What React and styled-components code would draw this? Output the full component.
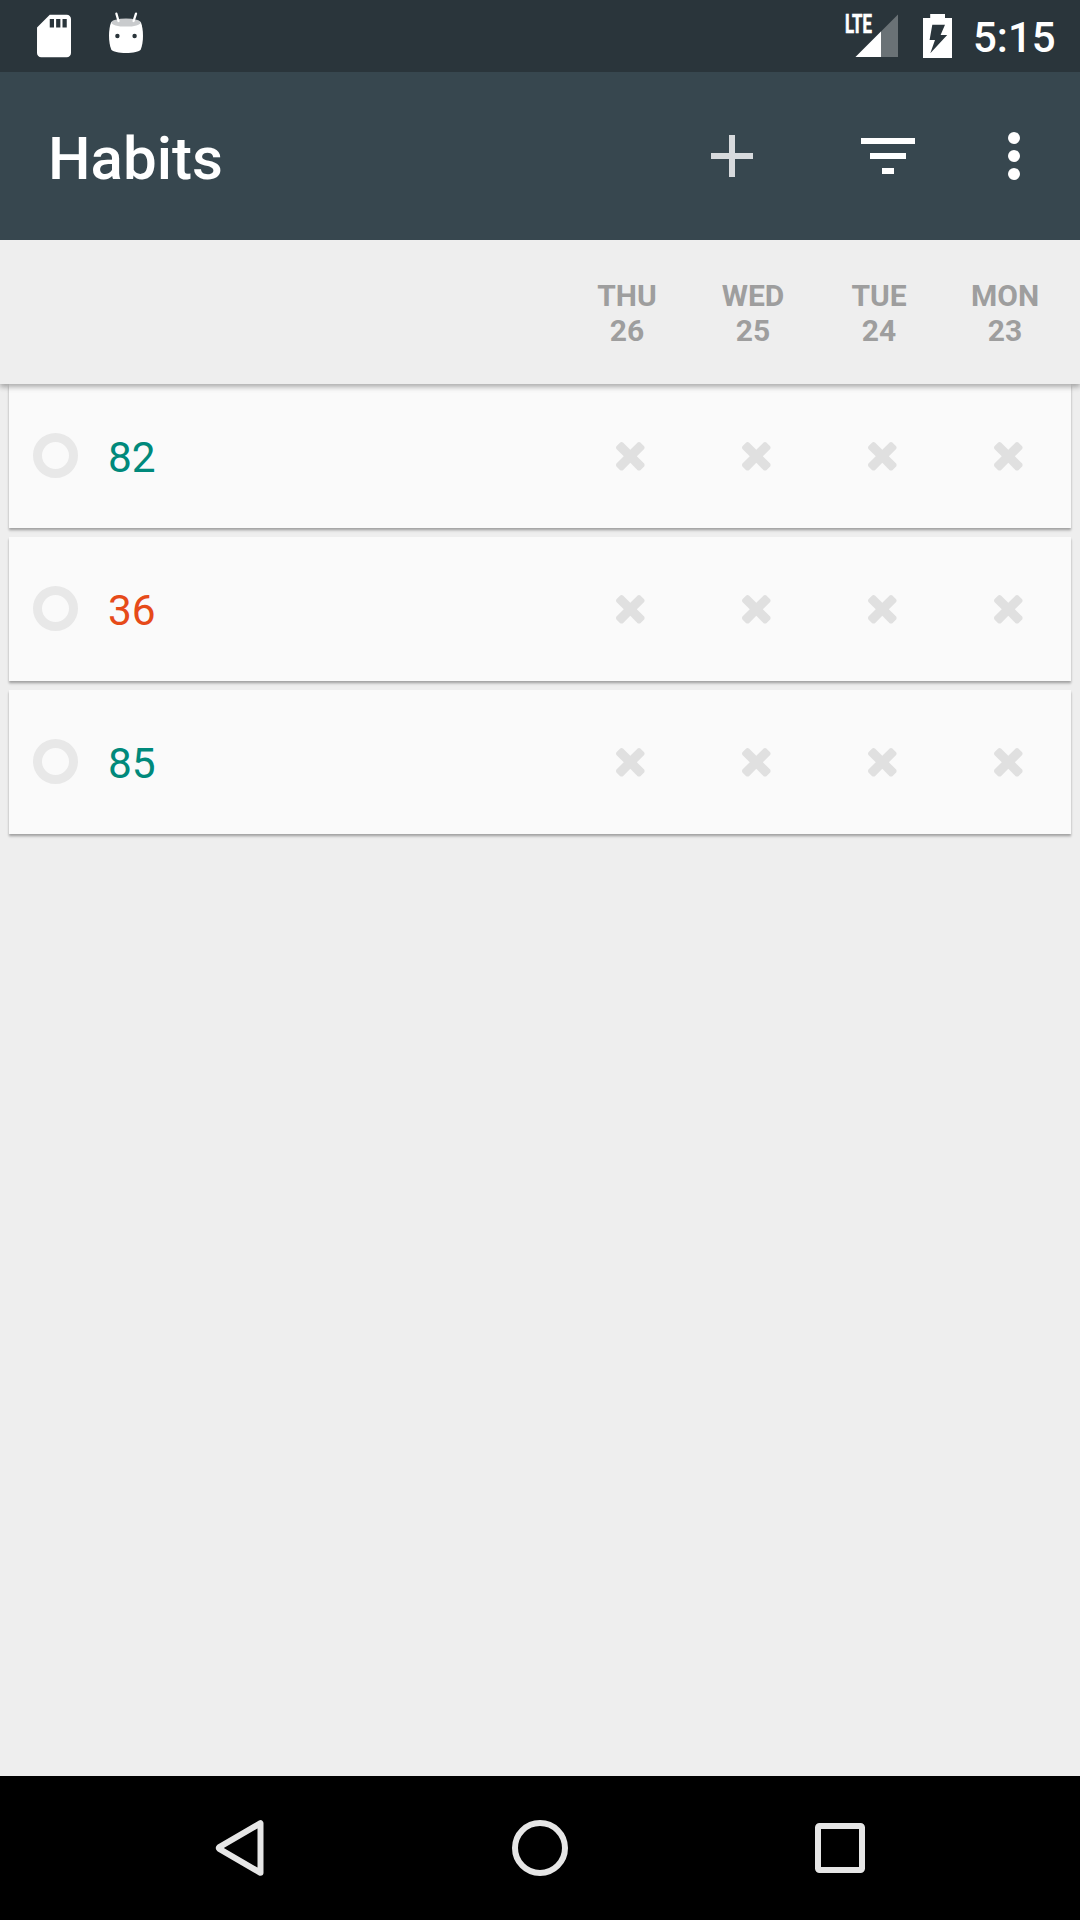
import React from "react";
import styled, { createGlobalStyle } from "styled-components";

const GlobalStyle = createGlobalStyle`
  html, body { margin: 0; padding: 0; background: #eeeeee; }
  * { box-sizing: border-box; }
`;

const Screen = styled.div`
  width: 1080px;
  height: 1920px;
  display: flex;
  flex-direction: column;
  overflow: hidden;
  background: #eeeeee;
  font-family: Roboto, "Noto Sans", sans-serif;
`;

const StatusBar = styled.header`
  height: 72px;
  flex: none;
  display: flex;
  justify-content: space-between;
  background: #2a353b;
`;

const StatusGroup = styled.div`
  display: flex;
  padding: ${(p) => (p.$end ? "0 24px 0 0" : "0 0 0 24px")};
`;

const StatusIcon = styled.svg`
  display: block;
  flex: none;
  height: 72px;
  width: ${(p) => p.$width}px;
`;

const Clock = styled.time`
  width: 83px;
  font-size: 42px;
  font-weight: 500;
  line-height: 76px;
  color: #ffffff;
  white-space: nowrap;
`;

const Toolbar = styled.div`
  height: 168px;
  flex: none;
  display: flex;
  align-items: center;
  justify-content: space-between;
  padding: 0 12px 0 48px;
  background: #37474f;
`;

const Title = styled.h1`
  margin: 0;
  padding-top: 6px;
  font-size: 60px;
  font-weight: 500;
  line-height: 72px;
  color: #ffffff;
`;

const Actions = styled.div`
  display: flex;
  align-items: center;
`;

const ActionButton = styled.button`
  width: ${(p) => p.$width}px;
  height: 144px;
  margin: 0 ${(p) => p.$gap || 0}px 0 0;
  padding: 0;
  border: 0;
  background: none;
  color: ${(p) => p.$color || "#ffffff"};
  display: flex;
  align-items: center;
  justify-content: center;
`;

const DayHeader = styled.div`
  height: 144px;
  flex: none;
  display: flex;
  justify-content: flex-end;
  padding: 38px 12px 0 0;
  position: relative;
  z-index: 1;
  background: #eeeeee;
  box-shadow: 0 3px 5px rgba(0, 0, 0, 0.27), 0 0 10px rgba(0, 0, 0, 0.09);
  clip-path: inset(0 0 -24px 0);
`;

const Day = styled.div`
  width: 126px;
  display: flex;
  flex-direction: column;
  align-items: center;
  font-size: 30px;
  font-weight: 700;
  line-height: 35px;
  color: #9e9e9e;
`;

const HabitList = styled.main`
  flex: 1;
  display: flex;
  flex-direction: column;
  gap: 9px;
  padding: 0 9px;
`;

const HabitCard = styled.article`
  height: 144px;
  flex: none;
  display: flex;
  align-items: center;
  background: #fafafa;
  box-shadow: 0 2px 2px rgba(0, 0, 0, 0.24), 0 3px 3px rgba(0, 0, 0, 0.1);
`;

const ScoreRing = styled.div`
  width: 45px;
  height: 45px;
  margin: 0 30px 1px 24px;
  border: 9px solid #e8e8e8;
  border-radius: 50%;
`;

const HabitName = styled.span`
  flex: 1;
  padding-top: 3px;
  font-size: 42.4px;
  line-height: 50px;
  color: ${(p) => p.$color};
`;

const CheckCell = styled.div`
  width: 126px;
  padding: 1px 0 0 1px;
  display: flex;
  align-items: center;
  justify-content: center;
`;

const NavBar = styled.nav`
  height: 144px;
  flex: none;
  display: flex;
  padding: 0 90px;
  background: #000000;
`;

const NavButton = styled.button`
  flex: 1;
  padding: 0;
  border: 0;
  background: none;
  display: flex;
  align-items: center;
  justify-content: center;
`;

const NavIcon = ({ children }) => (
  <svg width="60" height="60" viewBox="-30 -30 60 60" fill="none" stroke="#e6e6e6" strokeWidth="6">
    {children}
  </svg>
);

const CrossMark = () => (
  <svg width="28.6" height="28.6" viewBox="110 -18 1188 1188" fill="#e0e0e0">
    <path d="M1298 214q0 -40 -28 -68l-136 -136q-28 -28 -68 -28t-68 28l-294 294l-294 -294q-28 -28 -68 -28t-68 28l-136 136q-28 28 -28 68t28 68l294 294l-294 294q-28 28 -28 68t28 68l136 136q28 28 68 28t68 -28l294 -294l294 294q28 28 68 28t68 -28l136 -136q28 -28 28 -68t-28 -68l-294 -294l294 -294q28 -28 28 -68z" />
  </svg>
);

const days = [
  { name: "THU", date: 26 },
  { name: "WED", date: 25 },
  { name: "TUE", date: 24 },
  { name: "MON", date: 23 },
];

const habits = [
  { name: "82", color: "#00897b" },
  { name: "36", color: "#e64a19" },
  { name: "85", color: "#00897b" },
];

export default function App() {
  return (
    <>
      <GlobalStyle />
      <Screen>
        <StatusBar>
          <StatusGroup>
            <StatusIcon $width={72} viewBox="24 0 72 72">
              <path
                transform="translate(28.5 10.5) scale(2.125)"
                fill="#ffffff"
                d="M18 2h-8L4.02 8 4 20c0 1.1.9 2 2 2h12c1.1 0 2-.9 2-2V4c0-1.1-.9-2-2-2zm-6 6h-2V4h2v4zm3 0h-2V4h2v4zm3 0h-2V4h2v4z"
              />
            </StatusIcon>
            <StatusIcon $width={72} viewBox="96 0 72 72">
              <path
                fill="#ffffff"
                d="M111.2 22C109.6 26 109 31 109 36C109 41 109.8 46 111.2 49.3C112.4 52 119 53 126 53C133 53 139.6 52 140.8 49.3C142.2 46 143 41 143 36C143 31 142.4 26 140.8 22Z"
              />
              <ellipse cx="126" cy="22.6" rx="14.8" ry="4" fill="#c9cbcd" />
              <path d="M116.4 13.7L118.5 21M136 13.7L133.6 21" stroke="#ffffff" strokeWidth="2.3" strokeLinecap="round" />
              <circle cx="117.4" cy="36" r="2.2" fill="#2a353b" />
              <circle cx="134.6" cy="36" r="2.2" fill="#2a353b" />
            </StatusIcon>
          </StatusGroup>
          <StatusGroup $end>
            <StatusIcon $width={66} viewBox="840 0 66 72">
              <path fill="#6a7276" d="M898 14.5V57H855.5Z" />
              <path fill="#ffffff" d="M881 31.5V57H855.5Z" />
              <text
                x="844.9"
                y="33.4"
                fill="#ffffff"
                stroke="#ffffff"
                strokeWidth="0.7"
                fontFamily="Roboto, sans-serif"
                fontSize="25.5"
                fontWeight="700"
                textLength="27"
                lengthAdjust="spacingAndGlyphs"
              >
                LTE
              </text>
            </StatusIcon>
            <StatusIcon $width={67} viewBox="906 0 67 72">
              <path
                fill="#ffffff"
                fillRule="evenodd"
                d="M930.2 14H945V18H952V58H923V18H930.2ZM932.3 24.8L929.6 40H935L930.3 53.2L947.2 35H940.6L945 24.8Z"
              />
            </StatusIcon>
            <Clock>5:15</Clock>
          </StatusGroup>
        </StatusBar>

        <Toolbar>
          <Title>Habits</Title>
          <Actions>
            <ActionButton $width={144} $gap={12} $color="#d7dadd" aria-label="Add">
              <svg width="42" height="42" fill="currentColor">
                <path d="M18 0H24V18H42V24H24V42H18V24H0V18H18Z" />
              </svg>
            </ActionButton>
            <ActionButton $width={144} aria-label="Filter">
              <svg width="54" height="36" fill="currentColor">
                <path d="M0 0H54V6H0ZM9 15H45V21H9ZM21 30H33V36H21Z" />
              </svg>
            </ActionButton>
            <ActionButton $width={108} aria-label="More options">
              <svg width="12" height="48" fill="currentColor">
                <circle cx="6" cy="6" r="6" />
                <circle cx="6" cy="24" r="6" />
                <circle cx="6" cy="42" r="6" />
              </svg>
            </ActionButton>
          </Actions>
        </Toolbar>

        <DayHeader>
          {days.map((d) => (
            <Day key={d.date}>
              <span>{d.name}</span>
              <span>{d.date}</span>
            </Day>
          ))}
        </DayHeader>

        <HabitList>
          {habits.map((h) => (
            <HabitCard key={h.name}>
              <ScoreRing />
              <HabitName $color={h.color}>{h.name}</HabitName>
              {days.map((d) => (
                <CheckCell key={d.date}>
                  <CrossMark />
                </CheckCell>
              ))}
            </HabitCard>
          ))}
        </HabitList>

        <NavBar>
          <NavButton aria-label="Back">
            <NavIcon>
              <path d="M20.5 -24.8V24.8L-20.7 0.8Q-21.5 0 -20.7 -0.8Z" strokeLinejoin="round" />
            </NavIcon>
          </NavButton>
          <NavButton aria-label="Home">
            <NavIcon>
              <circle cx="0" cy="0" r="25" />
            </NavIcon>
          </NavButton>
          <NavButton aria-label="Recent apps">
            <NavIcon>
              <rect x="-22" y="-22" width="44" height="44" rx="1.5" />
            </NavIcon>
          </NavButton>
        </NavBar>
      </Screen>
    </>
  );
}
